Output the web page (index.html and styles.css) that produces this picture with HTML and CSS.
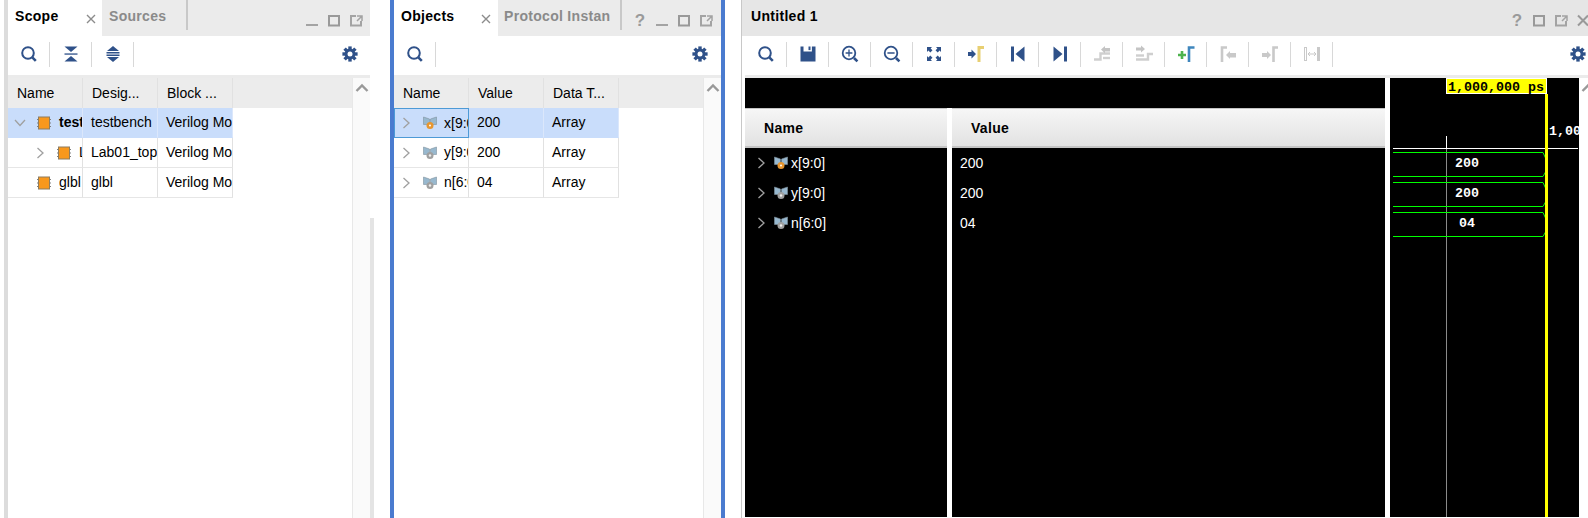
FILE: index.html
```html
<!DOCTYPE html>
<html lang="en">
<head>
<meta charset="utf-8">
<title>Simulation</title>
<link rel="stylesheet" href="styles.css">
</head>
<body>
<svg class="defs" xmlns="http://www.w3.org/2000/svg">
  <symbol id="search" viewBox="0 0 20 20"><circle cx="9" cy="9" r="5.8" fill="none" stroke="#2f5189" stroke-width="2"/><path d="M13.3 13.3L16.8 16.8" stroke="#2f5189" stroke-width="2.6"/></symbol>
  <symbol id="zoomin" viewBox="0 0 20 20"><circle cx="9" cy="9" r="6.3" fill="none" stroke="#2f5189" stroke-width="1.8"/><path d="M14 14L17.4 17.4" stroke="#2f5189" stroke-width="2.6"/><path d="M5.6 9h6.8M9 5.6v6.8" stroke="#2f5189" stroke-width="1.3"/></symbol>
  <symbol id="zoomout" viewBox="0 0 20 20"><circle cx="9" cy="9" r="6.3" fill="none" stroke="#2f5189" stroke-width="1.8"/><path d="M14 14L17.4 17.4" stroke="#2f5189" stroke-width="2.6"/><path d="M5.4 9h7.2" stroke="#2f5189" stroke-width="1.5"/></symbol>
  <symbol id="collapse" viewBox="0 0 20 20" fill="#2f5189"><path d="M3.5 2.500h13L10 8z"/><rect x="3.5" y="9.400" width="13" height="1.300"/><path d="M10 12l6.500 5.500h-13z"/></symbol>
  <symbol id="expand" viewBox="0 0 20 20" fill="#2f5189"><path d="M10 2l6 5H4z"/><rect x="3.5" y="8" width="13" height="1.5"/><rect x="3.5" y="10.5" width="13" height="1.5"/><path d="M4 13h12l-6 5z"/></symbol>
  <symbol id="gear" viewBox="0 0 20 20"><g stroke="#2f5189" stroke-width="3.4"><path d="M10 2.4v15.2"/><path d="M2.4 10h15.2"/><path d="M4.6 4.6l10.8 10.8"/><path d="M15.4 4.6L4.6 15.4"/></g><circle cx="10" cy="10" r="5.4" fill="#2f5189"/><circle cx="10" cy="10" r="2.5" fill="#fff"/></symbol>
  <symbol id="save" viewBox="0 0 20 20"><path fill="#2f5189" d="M2.5 2.5h3v5h8.4v-5h3.6v15h-15z"/><rect x="10.5" y="2.5" width="2" height="3.6" fill="#2f5189"/></symbol>
  <symbol id="fit" viewBox="0 0 20 20" fill="#2f5189"><path d="M3 3h5L6.6 4.4l1.9 1.9-2.2 2.2-1.9-1.9L3 8z"/><path d="M17 3v5l-1.4-1.4-1.9 1.9-2.2-2.2 1.9-1.9L12 3z"/><path d="M3 17v-5l1.4 1.4 1.9-1.9 2.2 2.2-1.9 1.9L8 17z"/><path d="M17 17h-5l1.4-1.4-1.9-1.9 2.2-2.2 1.9 1.9L17 12z"/></symbol>
  <symbol id="cursor" viewBox="0 0 20 20"><path fill="#2f5189" d="M2 8h3.500V5.500L10 10l-4.500 4.500V12H2z"/><path d="M13 18V3.500h5" fill="none" stroke="#e8cf72" stroke-width="3"/></symbol>
  <symbol id="first" viewBox="0 0 20 20" fill="#2f5189"><rect x="3" y="2.500" width="3" height="15"/><path d="M16.500 2.500v15L7.500 10z"/></symbol>
  <symbol id="last" viewBox="0 0 20 20" fill="#2f5189"><rect x="14" y="2.500" width="3" height="15"/><path d="M3.500 2.500v15L12.500 10z"/></symbol>
  <symbol id="prevt" viewBox="0 0 20 20"><path d="M2 15.500h6.500V9.500H18" fill="none" stroke="#cfcfcf" stroke-width="2.400"/><path d="M11 14h7" stroke="#cfcfcf" stroke-width="2.400"/><path fill="#c4c4c4" d="M9 5.500L13 2v2h5v3.500h-5v2z"/></symbol>
  <symbol id="nextt" viewBox="0 0 20 20"><path d="M2 15.500h12V10H19" fill="none" stroke="#cfcfcf" stroke-width="2.400"/><path d="M2 11.500h8" stroke="#cfcfcf" stroke-width="2.400"/><path fill="#c4c4c4" d="M2 3.500h5v-2l4 3.500-4 3.500v-2H2z"/></symbol>
  <symbol id="addm" viewBox="0 0 20 20"><path d="M2 11h8M6 7v8" stroke="#4db34d" stroke-width="2.600"/><path d="M13 18V3.500h5.500" fill="none" stroke="#3f86bd" stroke-width="2.600"/></symbol>
  <symbol id="prevm" viewBox="0 0 20 20"><path d="M4 18V3.500h5" fill="none" stroke="#c9c9c9" stroke-width="2.600"/><path fill="#c9c9c9" d="M8 11l4-4v2h6v4.500h-6V15z"/></symbol>
  <symbol id="nextm" viewBox="0 0 20 20"><path d="M13.500 18V3.500H18" fill="none" stroke="#c9c9c9" stroke-width="2.600"/><path fill="#c9c9c9" d="M2 9h5V7l4 4-4 4v-2H2z"/></symbol>
  <symbol id="swap" viewBox="0 0 20 20"><rect x="2.500" y="3.500" width="2" height="13" fill="none" stroke="#c9c9c9"/><rect x="15" y="3" width="3" height="14" fill="#c9c9c9"/><path d="M6 10h8M8 8l-2 2 2 2M12 8l2 2-2 2" fill="none" stroke="#c9c9c9"/></symbol>
  <symbol id="min" viewBox="0 0 22 36"><rect x="5" y="24" width="12" height="2" fill="#a3a3a3"/></symbol>
  <symbol id="max" viewBox="0 0 22 36"><rect x="6" y="16" width="10" height="9.500" fill="none" stroke="#999" stroke-width="2"/></symbol>
  <symbol id="float" viewBox="0 0 22 36"><path d="M11 16H6v9.500h10V21" fill="none" stroke="#a3a3a3" stroke-width="2"/><path d="M12 16h5v5M16.500 16.500L12 21" fill="none" stroke="#a3a3a3" stroke-width="1.500"/></symbol>
  <symbol id="close" viewBox="0 0 10 10"><path d="M1 1l8 8M9 1L1 9" stroke="#8c8c8c" stroke-width="1.400"/></symbol>
  <symbol id="xclose" viewBox="0 0 22 36"><path d="M6 15.500l10 10M16 15.500l-10 10" stroke="#999" stroke-width="2"/></symbol>
  <symbol id="right" viewBox="0 0 10 12"><path d="M2.500 1l5.500 5-5.500 5" fill="none" stroke="#a0a0a0" stroke-width="1.300"/></symbol>
  <symbol id="down" viewBox="0 0 12 10"><path d="M1 2l5 5.500L11 2" fill="none" stroke="#a0a0a0" stroke-width="1.300"/></symbol>
  <symbol id="up" viewBox="0 0 14 10"><path d="M1.500 8L7 2.500 12.500 8" fill="none" stroke="#999" stroke-width="2.400"/></symbol>
  <symbol id="chip" viewBox="0 0 14 14"><path d="M0 3.500h14M0 7h14M0 10.500h14" stroke="#808080"/><rect x="1.500" y="1" width="11" height="12" fill="#f8981d" stroke="#8d7d60"/></symbol>
  <symbol id="sig-o" viewBox="0 0 14 14"><path d="M0.500 1l6 2v5.500h-6zM13.500 1l-6 2v5.500h6z" fill="#98b8ce" stroke="#7f929e" stroke-width=".6"/><circle cx="7" cy="9.500" r="3.500" fill="#e8962e"/><circle cx="7" cy="9.500" r="1" fill="#fff"/></symbol>
  <symbol id="sig-g" viewBox="0 0 14 14"><path d="M0.500 1l6 2v5.500h-6zM13.500 1l-6 2v5.500h6z" fill="#98b8ce" stroke="#7f929e" stroke-width=".6"/><circle cx="7" cy="9.500" r="3.500" fill="#a0a0a0"/><circle cx="7" cy="9.500" r="1.200" fill="#eee"/></symbol>
</svg>

<main class="app">
  <section class="pane scope">
    <header class="tabbar">
      <div class="tab active"><span>Scope</span><svg class="x"><use href="#close"/></svg></div>
      <div class="tab sources">Sources</div>
      <div class="winbtns">
        <svg class="wb"><use href="#min"/></svg><svg class="wb"><use href="#max"/></svg><svg class="wb"><use href="#float"/></svg>
      </div>
    </header>
    <nav class="toolbar">
      <div class="tool"><svg class="ic"><use href="#search"/></svg></div>
      <div class="tool"><svg class="ic"><use href="#collapse"/></svg></div>
      <div class="tool"><svg class="ic"><use href="#expand"/></svg></div>
      <svg class="ic gear"><use href="#gear"/></svg>
    </nav>
    <div class="content">
      <div class="table">
        <div class="row head"><div class="cell">Name</div><div class="cell">Desig...</div><div class="cell">Block ...</div></div>
        <div class="row sel">
          <div class="cell tree"><svg class="chev down"><use href="#down"/></svg><svg class="chip"><use href="#chip"/></svg><b>testbench</b></div>
          <div class="cell val">testbench</div><div class="cell val">Verilog Module</div>
        </div>
        <div class="row">
          <div class="cell tree lvl2"><svg class="chev"><use href="#right"/></svg><svg class="chip"><use href="#chip"/></svg><span>Lab01_top</span></div>
          <div class="cell val">Lab01_top</div><div class="cell val">Verilog Module</div>
        </div>
        <div class="row">
          <div class="cell tree leaf"><svg class="chip"><use href="#chip"/></svg><span>glbl</span></div>
          <div class="cell val">glbl</div><div class="cell val">Verilog Module</div>
        </div>
      </div>
      <div class="scrollbar"><svg class="up"><use href="#up"/></svg></div>
      <div class="edge"></div>
    </div>
  </section>

  <section class="pane objects">
    <header class="tabbar">
      <div class="tab active"><span>Objects</span><svg class="x"><use href="#close"/></svg></div>
      <div class="tab protocol">Protocol Instan</div>
      <div class="winbtns">
        <span class="help">?</span><svg class="wb"><use href="#min"/></svg><svg class="wb"><use href="#max"/></svg><svg class="wb"><use href="#float"/></svg>
      </div>
    </header>
    <nav class="toolbar">
      <div class="tool"><svg class="ic"><use href="#search"/></svg></div>
      <svg class="ic gear"><use href="#gear"/></svg>
    </nav>
    <div class="content">
      <div class="table">
        <div class="row head"><div class="cell">Name</div><div class="cell">Value</div><div class="cell">Data T...</div></div>
        <div class="row sel">
          <div class="cell tree obj focus"><svg class="chev"><use href="#right"/></svg><svg class="sig"><use href="#sig-o"/></svg><span>x[9:0]</span></div>
          <div class="cell val">200</div><div class="cell val">Array</div>
        </div>
        <div class="row">
          <div class="cell tree obj"><svg class="chev"><use href="#right"/></svg><svg class="sig"><use href="#sig-g"/></svg><span>y[9:0]</span></div>
          <div class="cell val">200</div><div class="cell val">Array</div>
        </div>
        <div class="row">
          <div class="cell tree obj"><svg class="chev"><use href="#right"/></svg><svg class="sig"><use href="#sig-g"/></svg><span>n[6:0]</span></div>
          <div class="cell val">04</div><div class="cell val">Array</div>
        </div>
      </div>
      <div class="scrollbar"><svg class="up"><use href="#up"/></svg></div>
    </div>
  </section>

  <section class="pane waves">
    <header class="tabbar">
      <div class="title">Untitled 1</div>
      <div class="winbtns">
        <span class="help">?</span><svg class="wb"><use href="#max"/></svg><svg class="wb"><use href="#float"/></svg><svg class="wb"><use href="#xclose"/></svg>
      </div>
    </header>
    <nav class="toolbar">
      <div class="tool"><svg class="ic"><use href="#search"/></svg></div>
      <div class="tool"><svg class="ic"><use href="#save"/></svg></div>
      <div class="tool"><svg class="ic"><use href="#zoomin"/></svg></div>
      <div class="tool"><svg class="ic"><use href="#zoomout"/></svg></div>
      <div class="tool"><svg class="ic"><use href="#fit"/></svg></div>
      <div class="tool"><svg class="ic"><use href="#cursor"/></svg></div>
      <div class="tool"><svg class="ic"><use href="#first"/></svg></div>
      <div class="tool"><svg class="ic"><use href="#last"/></svg></div>
      <div class="tool"><svg class="ic"><use href="#prevt"/></svg></div>
      <div class="tool"><svg class="ic"><use href="#nextt"/></svg></div>
      <div class="tool"><svg class="ic"><use href="#addm"/></svg></div>
      <div class="tool"><svg class="ic"><use href="#prevm"/></svg></div>
      <div class="tool"><svg class="ic"><use href="#nextm"/></svg></div>
      <div class="tool"><svg class="ic"><use href="#swap"/></svg></div>
      <svg class="ic gear"><use href="#gear"/></svg>
    </nav>
    <div class="wave-body">
      <div class="signals">
        <div class="sig-top"></div>
        <div class="sig-cols">
          <div class="sig-col names">
            <div class="sig-head">Name</div>
            <div class="sig-row"><svg class="chev"><use href="#right"/></svg><svg class="sig"><use href="#sig-o"/></svg><span>x[9:0]</span></div>
            <div class="sig-row"><svg class="chev"><use href="#right"/></svg><svg class="sig"><use href="#sig-g"/></svg><span>y[9:0]</span></div>
            <div class="sig-row"><svg class="chev"><use href="#right"/></svg><svg class="sig"><use href="#sig-g"/></svg><span>n[6:0]</span></div>
          </div>
          <div class="sig-col values">
            <div class="sig-head">Value</div>
            <div class="sig-row">200</div>
            <div class="sig-row">200</div>
            <div class="sig-row">04</div>
          </div>
        </div>
      </div>
      <svg class="wave" viewBox="0 0 189 439" xmlns="http://www.w3.org/2000/svg">
        <path class="grid-dim" d="M56.500 70V439"/>
        <path class="grid" d="M3 70.500H188M56.500 58V70"/>
        <path class="sigline" d="M3 74.500H153L155.500 80V94L153 98.500H3"/>
        <path class="sigline" d="M3 104.500H153L155.500 110V124L153 128.500H3"/>
        <path class="sigline" d="M3 134.500H153L155.500 140V154L153 158.500H3"/>
        <rect class="marker" x="56.500" y="0.500" width="100" height="15"/>
        <text class="mono dark" x="58" y="13">1,000,000 ps</text>
        <rect class="cursor" x="155" y="16" width="3" height="423"/>
        <text class="mono" x="159" y="57">1,00</text>
        <text class="mono" x="65" y="89">200</text>
        <text class="mono" x="65" y="119">200</text>
        <text class="mono" x="69" y="149">04</text>
      </svg>
      <div class="wave-scroll"><svg class="up"><use href="#up"/></svg></div>
    </div>
  </section>
</main>
</body>
</html>
```

FILE: styles.css
```css
* { box-sizing: border-box; }
html, body { margin: 0; padding: 0; height: 100%; background: #fff; overflow: hidden; }
body { font-family: "Liberation Sans", Arial, sans-serif; font-size: 14px; color: #000; }
.defs { display: none; }

.app { display: flex; height: 518px; }
.pane { display: flex; flex-direction: column; height: 100%; }
.scope { margin-left: 4px; border-left: 4px solid #dcdcdc; box-sizing: content-box; width: 362px; flex: none; }
.objects { width: 335px; flex: none; margin-left: 20px; border-left: 4px solid #4a7bcf; border-right: 4px solid #4a7bcf; }
.waves { flex: 1; min-width: 0; margin-left: 16px; border-left: 1px solid #c8c8c8; overflow: hidden; }

.tabbar { display: flex; height: 36px; flex: none; background: #ebebeb; position: relative; }
.waves .tabbar { background: #e6e6e6; }
.tab { height: 36px; font-weight: bold; letter-spacing: .3px; line-height: 32px; padding-left: 7px; color: #8a8a8a; }
.tab.active { display: flex; width: 94px; background: #fff; color: #000; flex: none; }
.objects .tab.active { width: 104px; }
.objects .tab.active .x { margin-left: 30px; }
.x { width: 10px; height: 10px; margin: 14px 0 0 27px; }
.objects .tab.active span { width: 50px; }
.sources { width: 86px; }
.protocol { width: 124px; padding-left: 6px; }
.sources, .protocol { height: 30px; border-right: 2px solid #c8c8c8; }
.title { font-weight: bold; letter-spacing: .3px; line-height: 32px; padding-left: 9px; }
.winbtns { margin-left: auto; display: flex; padding-right: 3px; }
.objects .winbtns { padding-right: 4px; }
.waves .winbtns { padding-right: 0; margin-right: -6px; }
.wb { width: 22px; height: 36px; display: block; }
.help { width: 22px; text-align: center; color: #9a9a9a; font-weight: bold; font-size: 17px; line-height: 41px; }

.toolbar { display: flex; flex: none; height: 42px; padding-bottom: 3px; background: #fff; border-bottom: 3px solid #ebebeb; align-items: center; }
.waves .toolbar { margin-left: 3px; }
.tool { width: 42px; height: 25px; display: flex; align-items: center; justify-content: center; border-right: 1px solid #d8d8d8; flex: none; }
.ic { width: 20px; height: 20px; display: block; }
.gear { margin-left: auto; margin-right: 10px; }
.objects .gear { margin-right: 11px; }
.waves .gear { margin-right: 0; }

.content { flex: 1; display: flex; min-height: 0; }
.table { flex: 1; min-width: 0; }
.scrollbar { width: 18px; background: #fafafa; border-left: 1px solid #e8e8e8; flex: none; text-align: center; }
.scrollbar .up, .wave-scroll .up { width: 14px; height: 10px; display: block; margin: 5px auto 0; }
.edge { width: 4px; margin-top: 140px; margin-right: -4px; background: #e4e4e4; flex: none; }

.row { display: flex; height: 30px; }
.row.head { background: #ececec; }
.cell { width: 75px; flex: none; padding-left: 9px; line-height: 29px; white-space: nowrap; overflow: hidden; border-right: 1px solid #e1e1e1; border-bottom: 1px solid #e6e6e6; }
.head .cell { border-bottom: 0; line-height: 30px; }
.cell.val { padding-left: 8px; }
.row.sel .cell { background: #c9ddfb; border-bottom-color: #c9ddfb; border-right-color: #dbe7fb; }
.tree { display: flex; align-items: center; padding-left: 0; }
.tree span, .tree b { display: block; }
.chev { width: 10px; height: 12px; flex: none; display: block; }
.chev.down { width: 12px; height: 10px; margin-left: 6px; }
.chip { width: 14px; height: 14px; flex: none; display: block; margin-left: 10px; margin-right: 8px; }
.scope .tree .chev:not(.down) { margin-left: 27px; }
.scope .tree .chip { margin-left: 11px; }
.scope .tree.lvl2 .chip { margin-left: 12px; }
.leaf { padding-left: 18px; }
.sig { width: 14px; height: 14px; flex: none; display: block; }
.obj .chev { margin-left: 7px; }
.obj .sig { margin-left: 12px; margin-right: 7px; }
.row.sel .cell.focus { border: 1px solid #4d9ad6; }
.focus .chev { margin-left: 6px; }

.wave-body { flex: 1; display: flex; min-height: 0; padding-left: 3px; margin-bottom: 1px; }
.signals { width: 640px; flex: none; display: flex; flex-direction: column; }
.sig-top { height: 30px; background: #000; flex: none; }
.sig-cols { flex: 1; display: flex; gap: 5px; min-height: 0; }
.sig-col { background: #000; color: #fff; }
.names { width: 202px; flex: none; }
.values { flex: 1; }
.sig-head { height: 40px; line-height: 39px; background: linear-gradient(#f6f6f6, #e2e2e2); border-top: 1px solid #c4c4c4; border-bottom: 2px solid #c4c4c4; color: #000; font-weight: bold; letter-spacing: .3px; padding-left: 19px; }
.sig-row { display: flex; align-items: center; height: 30px; }
.sig-row .chev { margin-left: 11px; }
.sig-row .sig { margin-left: 8px; margin-right: 3px; }
.values .sig-row { padding-left: 8px; }

.wave { width: 189px; height: 100%; margin-left: 5px; background: #000; display: block; flex: none; }
.grid { stroke: #fff; stroke-width: 1; fill: none; }
.grid-dim { stroke: #8a8a8a; stroke-width: 1; fill: none; }
.sigline { stroke: #00ff00; stroke-width: 1; fill: none; }
.marker { fill: #ffff00; stroke: #fff; stroke-width: 1; }
.cursor { fill: #ffff00; }
.mono { font-family: "Liberation Mono", monospace; font-size: 13.33px; font-weight: bold; fill: #fff; }
.mono.dark { fill: #000; }
.wave-scroll { width: 7px; margin-left: 2px; overflow: hidden; flex: none; }
.wave-scroll .up { margin-left: 0; }
```
